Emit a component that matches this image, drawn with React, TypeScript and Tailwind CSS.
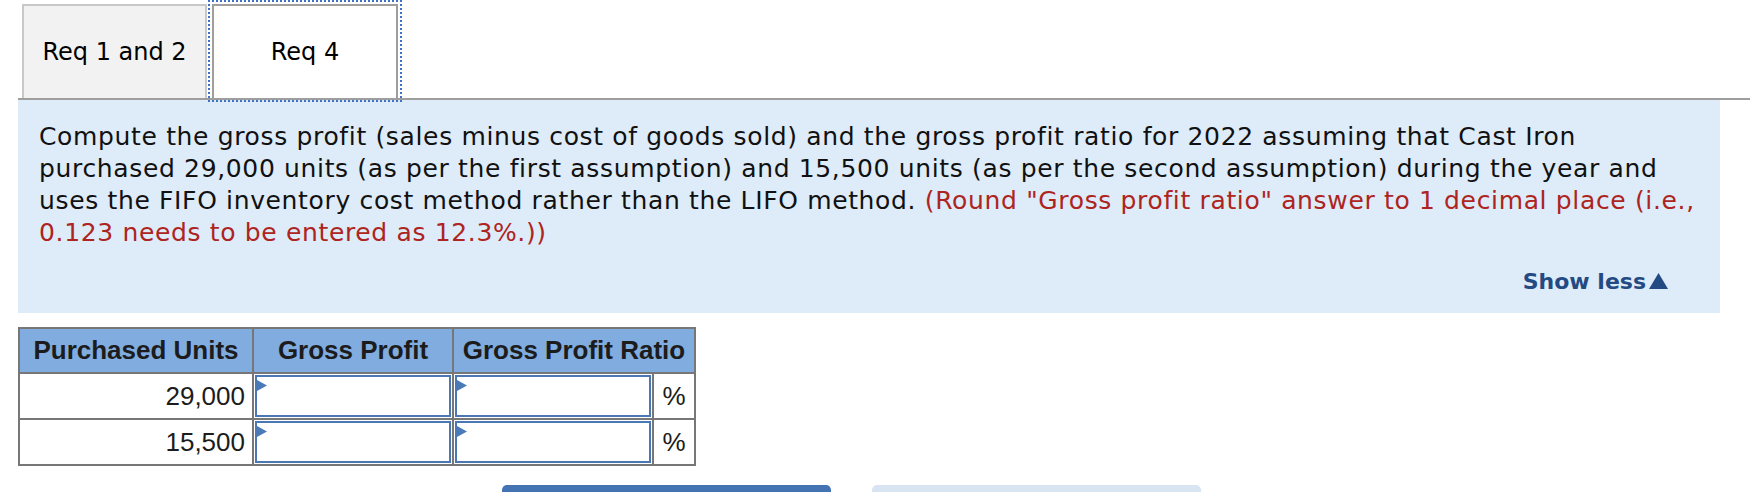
import React from 'react';

const Flag: React.FC = () => (
  <svg className="absolute left-0 top-[3px]" width="10" height="11" viewBox="0 0 10 11">
    <path d="M0 0 L10 5.5 L0 11 Z" fill="#4a7ab8" />
  </svg>
);

const AnswerInput: React.FC = () => (
  <div className="relative m-px h-[42px] border-2 border-[#4b77b4] bg-white">
    <Flag />
  </div>
);

const rows = ['29,000', '15,500'];

const App: React.FC = () => {
  return (
    <div className="w-[1750px] h-[492px] overflow-hidden bg-white font-['DejaVu_Sans',sans-serif] text-black">
      <div className="pl-[18px]">
        {/* Tabs */}
        <div className="flex gap-[5px] pl-[4px] pt-[4px] border-b-2 border-[#9e9e9e]">
          <button className="w-[185px] h-[94px] border-2 border-b-0 border-[#c8c8c8] bg-[#f2f2f2] text-[24px] text-black">
            Req 1 and 2
          </button>
          <button className="w-[186px] h-[94px] border-2 border-b-0 border-[#9e9e9e] bg-white text-[24px] text-black outline-2 outline-dotted outline-offset-2 outline-[#3f72c6]">
            Req 4
          </button>
        </div>

        {/* Instructions */}
        <div className="w-[1702px] bg-[#deebf8] pt-[21px] pl-[21px] pr-[8px] pb-[15px]">
          <p className="whitespace-nowrap text-[25px] tracking-[0.65px] leading-[32px] text-[#111]">
            Compute the gross profit (sales minus cost of goods sold) and the gross profit ratio for 2022 assuming that Cast Iron
            <br />
            purchased 29,000 units (as per the first assumption) and 15,500 units (as per the second assumption) during the year and
            <br />
            uses the FIFO inventory cost method rather than the LIFO method.{' '}
            <span className="text-[#ad2420]">
              (Round "Gross profit ratio" answer to 1 decimal place (i.e.,
              <br />
              0.123 needs to be entered as 12.3%.))
            </span>
          </p>
          <div className="mt-[17px] flex justify-end pr-[44px]">
            <button className="flex items-baseline gap-[3px] text-[22px] leading-[32px] font-bold text-[#234a82]">
              Show less
              <svg width="19" height="16" viewBox="0 0 19 16">
                <path d="M9.5 0 L19 16 L0 16 Z" fill="#234a82" />
              </svg>
            </button>
          </div>
        </div>

        {/* Answer table */}
        <table className="mt-[14px] border-separate border-spacing-[2px] bg-[#777] font-['Liberation_Sans',Arial,sans-serif] text-[26px] text-[#1c1c1c]">
          <thead>
            <tr className="h-[43px]">
              <th className="w-[232px] p-0 bg-[#80acdf] font-bold text-center">Purchased Units</th>
              <th className="w-[198px] p-0 bg-[#80acdf] font-bold text-center">Gross Profit</th>
              <th colSpan={2} className="w-[240px] p-0 bg-[#80acdf] font-bold text-center">Gross Profit Ratio</th>
            </tr>
          </thead>
          <tbody>
            {rows.map(units => (
              <tr key={units} className="h-[44px]">
                <td className="w-[232px] p-0 pr-[7px] bg-white text-right">{units}</td>
                <td className="w-[198px] p-0 bg-white">
                  <AnswerInput />
                </td>
                <td className="w-[198px] p-0 bg-white">
                  <AnswerInput />
                </td>
                <td className="w-[40px] p-0 bg-white text-center">%</td>
              </tr>
            ))}
          </tbody>
        </table>

        {/* Nav buttons */}
        <div className="mt-[19px] flex gap-[41px] pl-[484px]">
          <button className="w-[329px] h-[40px] rounded-t-[5px] bg-[#4473b4]" />
          <button className="w-[329px] h-[40px] rounded-t-[5px] bg-[#d8e4f1]" />
        </div>
      </div>
    </div>
  );
};

export default App;
